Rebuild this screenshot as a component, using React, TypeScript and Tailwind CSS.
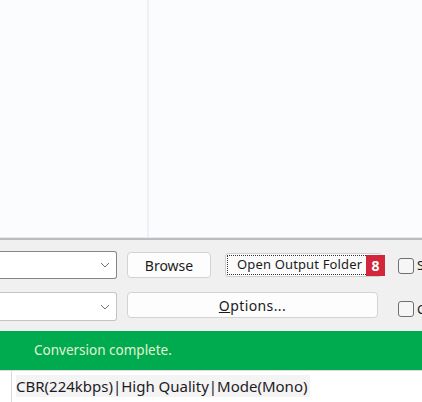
import React from "react";

function Chevron() {
  return (
    <svg width="10" height="6" viewBox="0 0 10 6" className="absolute right-[6px] top-1/2 -translate-y-1/2">
      <path d="M1 1 L5 5 L9 1" fill="none" stroke="#6d6d6d" strokeWidth="1" />
    </svg>
  );
}

function Checkbox() {
  return <div className="w-[16px] h-[16px] rounded-[3px] border border-[#6f6f6f] bg-[#f6f6f6] shrink-0" />;
}

export default function App() {
  return (
    <div
      className="w-[422px] h-[402px] overflow-hidden flex flex-col bg-[#f0f0f0]"
      style={{ fontFamily: '"Noto Sans", "Open Sans", sans-serif' }}
    >
      {/* top list area */}
      <div className="h-[238px] flex bg-[#fbfcfd] border-b border-[#e9eaec]">
        <div className="w-[149px] border-r-2 border-[#eef1f3]" />
        <div className="flex-1" />
      </div>
      <div className="h-[2px] bg-[#b9bcc0]" />

      {/* control panel */}
      <div className="h-[91px] flex bg-[#f0f0f0]">
        <div className="w-[382px] shrink-0 pt-[11px]">
          <div className="flex items-start">
            <div className="relative w-[117px] h-[28px] bg-white border border-l-0 border-[#858585] rounded-r-[3px]">
              <Chevron />
            </div>
            <button className="ml-[10px] w-[84px] h-[26px] mt-[1px] bg-[#fdfdfd] border border-[#d3d3d3] rounded-[4px] text-[14px] text-[#1b1b1b] flex items-center justify-center">
              Browse
            </button>
            <button className="relative ml-[14px] w-[157px] h-[24px] mt-[2px] bg-[#fbfbfb] border border-[#cfcfcf] rounded-[3px] text-[13px] text-[#1b1b1b] flex items-center">
              <span className="absolute inset-[1px] border border-dotted border-[#333]" />
              <span className="ml-[11px] tracking-[0.15px]">Open Output Folder</span>
              <span className="absolute right-[-4px] top-[1px] w-[19px] h-[21px] bg-[#d1263b] text-white font-bold text-[14px] flex items-center justify-center leading-none">
                8
              </span>
            </button>
          </div>
          <div className="flex items-start mt-[13px]">
            <div className="relative w-[117px] h-[29px] bg-white border border-l-0 border-[#c4c4c4] rounded-r-[3px]">
              <Chevron />
            </div>
            <button className="ml-[10px] w-[251px] h-[26px] bg-[#fdfdfd] border border-[#d3d3d3] rounded-[4px] text-[14px] text-[#1b1b1b] flex items-center justify-center">
              <span className="tracking-[0.4px]">
                <span className="underline">O</span>ptions...
              </span>
            </button>
          </div>
        </div>
        <div className="ml-[9px] w-px self-stretch bg-[#d6d6d6]" />
        <div className="ml-[7px] flex flex-col pt-[16px] gap-[24px] text-[13px] text-[#1b1b1b]">
          <div className="flex items-center gap-[3px] whitespace-nowrap">
            <Checkbox />
            <span>Save</span>
          </div>
          <div className="flex items-center gap-[3px] whitespace-nowrap">
            <Checkbox />
            <span>Close</span>
          </div>
        </div>
      </div>

      {/* status */}
      <div className="h-[39px] bg-[#00aa4f] flex items-center pl-[34px] text-[13.5px] text-[#e4f3d3] shrink-0">
        Conversion complete.
      </div>

      {/* bottom info */}
      <div className="flex-1 flex bg-white border-t border-[#dcdcdc]">
        <div className="w-[12px] border-r border-[#d9d9d9]" />
        <div className="flex items-end pb-[5px] pl-[4px]">
          <span className="text-[15px] leading-[22px] text-[#1c1c24] bg-[#f4f4f4] pr-[3px]">
            CBR(224kbps)|High Quality|Mode(Mono)
          </span>
        </div>
      </div>
    </div>
  );
}
